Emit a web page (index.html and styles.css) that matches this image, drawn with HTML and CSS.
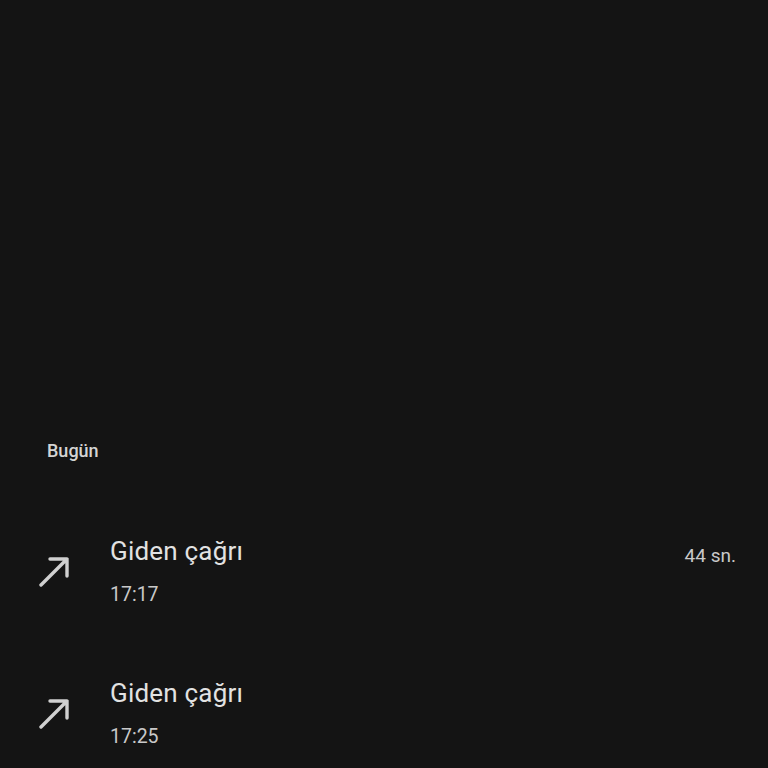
FILE: index.html
```html
<!DOCTYPE html>
<html lang="tr">

<head>
    <meta charset="UTF-8">
    <meta name="viewport" content="width=device-width, initial-scale=1.0">
    <title>Arama geçmişi</title>
    <link rel="stylesheet" href="styles.css">
</head>

<body>
    <main class="call-log">
        <h2 class="day-title">Bugün</h2>

        <div class="call-row">
            <svg class="call-icon" viewBox="0 0 32 32" width="32" height="32">
                <path d="M4 30 L30 4 M13 4 H30 V21" />
            </svg>
            <div class="call-info">
                <div class="call-type">Giden çağrı</div>
                <div class="call-time">17:17</div>
            </div>
            <div class="call-duration">44 sn.</div>
        </div>

        <div class="call-row">
            <svg class="call-icon" viewBox="0 0 32 32" width="32" height="32">
                <path d="M4 30 L30 4 M13 4 H30 V21" />
            </svg>
            <div class="call-info">
                <div class="call-type">Giden çağrı</div>
                <div class="call-time">17:25</div>
            </div>
        </div>
    </main>
</body>

</html>
```

FILE: styles.css
```css
body {
    font-family: Roboto, "Noto Sans", sans-serif;
    background-color: #141414;
    margin: 0;
    padding: 0;
    overflow: hidden;
}

.call-log {
    padding-top: 439px;
}

.day-title {
    margin: 0;
    padding-left: 47px;
    font-size: 18px;
    font-weight: 500;
    line-height: 24px;
    color: #d4d4d4;
}

.call-row {
    display: flex;
    align-items: center;
    padding: 35px 32px 35px 37px;
}

.day-title + .call-row {
    margin-top: 37px;
}

.call-icon {
    flex: none;
    fill: none;
    stroke: #d0d0d0;
    stroke-width: 3.4;
    stroke-linecap: round;
    stroke-linejoin: round;
}

.call-info {
    flex: 1;
    margin-left: 41px;
    display: flex;
    flex-direction: column;
    gap: 16px;
}

.call-type {
    font-size: 26px;
    letter-spacing: 0.2px;
    line-height: 32px;
    color: #e2e2e2;
}

.call-time {
    font-size: 19.5px;
    line-height: 24px;
    color: #c9c9c9;
}

.call-duration {
    align-self: flex-start;
    margin-top: 9px;
    font-size: 19px;
    line-height: 24px;
    color: #c9c9c9;
}
```
